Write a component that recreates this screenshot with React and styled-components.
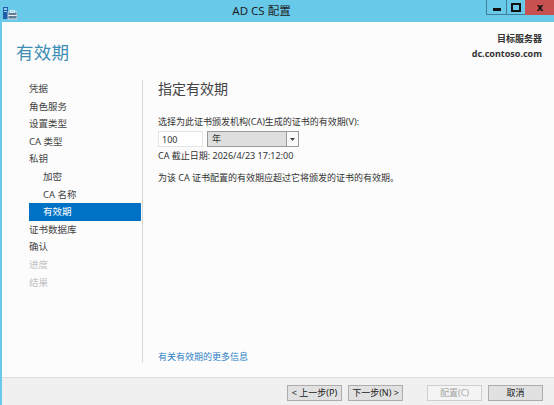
import styled, { createGlobalStyle } from "styled-components"

const Global = createGlobalStyle`
  html, body { margin: 0; padding: 0; }
  body {
    font-family: "Noto Sans", "Noto Sans CJK SC", sans-serif;
    background: #fcfcfc;
  }
`

//window frame
const Window = styled.div`
  width: 554px;
  height: 405px;
  display: flex;
  flex-direction: column;
  border-left: 2px solid #68c9e9;
  box-sizing: border-box;
  background: #fcfcfc;
  overflow: hidden;
`

const TitleBar = styled.div`
  height: 22px;
  flex: none;
  background: #68c9e9;
  display: flex;
  align-items: flex-start;
  position: relative;
  margin-left: -2px;
`

const AppIcon = styled.div`
  width: 14px;
  height: 14px;
  margin: 4px 0 0 3px;
`

const TitleText = styled.div`
  flex: 1;
  text-align: center;
  font-size: 11.5px;
  line-height: 22px;
  color: #1e1e1e;
  padding-left: 20px;
`

const Controls = styled.div`
  display: flex;
  height: 15px;
`

const Ctl = styled.div`
  width: ${p => p.w}px;
  height: 15px;
  box-sizing: border-box;
  background: ${p => p.close ? "#c75050" : "#68c9e9"};
  border: 1px solid ${p => p.close ? "#c75050" : "#3f7f99"};
  border-top: none;
  border-right: ${p => p.close ? "none" : "none"};
  display: flex;
  align-items: center;
  justify-content: center;
  font-family: "DejaVu Sans", sans-serif;
  font-weight: bold;
  font-size: 10px;
  color: #111;
`

const MinBar = styled.div`
  width: 8px;
  height: 3px;
  background: #111;
  margin-top: 5px;
`

const MaxBox = styled.div`
  width: 6px;
  height: 5px;
  border: 2px solid #111;
  border-top-width: 2px;
`

//header
const Header = styled.div`
  height: 58px;
  flex: none;
  display: flex;
  justify-content: space-between;
  padding: 0 12px 0 14px;
`

const PageTitle = styled.div`
  font-size: 17.5px;
  color: #3c8eb5;
  margin-top: 17px;
  letter-spacing: 0.2px;
`

const Server = styled.div`
  text-align: right;
  font-size: 9px;
  font-weight: bold;
  color: #333;
  margin-top: 9px;
  line-height: 15px;
`

//body
const Body = styled.div`
  flex: 1;
  display: flex;
  min-height: 0;
`

const Nav = styled.div`
  width: 112px;
  margin-left: 27px;
  display: flex;
  flex-direction: column;
`

const NavItem = styled.div`
  height: 17.6px;
  line-height: 17.6px;
  font-size: 9.5px;
  padding-left: ${p => p.sub ? 14 : 0}px;
  color: ${p => p.active ? "#fff" : p.off ? "#c2c2c2" : "#444"};
  background: ${p => p.active ? "#0072c6" : "transparent"};
  white-space: nowrap;
`

const Divider = styled.div`
  width: 1px;
  background: #d6d6d6;
  margin: 0 0 15px 1px;
`

const Content = styled.div`
  flex: 1;
  padding: 0 0 13px 15px;
  display: flex;
  flex-direction: column;
  color: #333;
  font-size: 9px;
`

const Heading = styled.div`
  font-size: 14px;
  color: #444;
  line-height: 18px;
  margin-top: 0;
`

const Label = styled.div`
  margin-top: 17px;
  line-height: 13px;
`

const Row = styled.div`
  display: flex;
  gap: 4px;
  margin-top: 3px;
`

const Input = styled.div`
  width: 45px;
  height: 16px;
  box-sizing: border-box;
  background: #fff;
  border: 1px solid #e4e4e4;
  padding-left: 3px;
  line-height: 15px;
  font-size: 9px;
`

const Select = styled.div`
  width: 92px;
  height: 16px;
  box-sizing: border-box;
  background: #dedede;
  border: 1px solid #9a9a9a;
  display: flex;
  font-size: 9px;
  line-height: 14px;
`

const SelectText = styled.div`
  flex: 1;
  padding-left: 4px;
`

const SelectArrow = styled.div`
  width: 11px;
  border-left: 1px solid #9a9a9a;
  background: #fafafa;
  display: flex;
  align-items: center;
  justify-content: center;
`

const Line = styled.div`
  margin-top: ${p => p.mt || 0}px;
  line-height: 14px;
`

const Spacer = styled.div`
  flex: 1;
`

const Link = styled.div`
  color: #2f82c6;
  font-size: 9px;
  line-height: 14px;
`

//footer
const Footer = styled.div`
  height: 28px;
  flex: none;
  background: #f0f0f0;
  border-top: 1px solid #dedede;
  box-sizing: border-box;
  margin-left: -2px;
  padding-left: 2px;
  display: flex;
  justify-content: flex-end;
  align-items: flex-start;
  padding-top: 7px;
  padding-right: 11px;
`

const Button = styled.div`
  width: 55px;
  height: 16px;
  box-sizing: border-box;
  border: 1px solid ${p => p.disabled ? "#cfcfcf" : "#adadad"};
  background: ${p => p.disabled ? "#f4f4f4" : "#e1e1e1"};
  color: ${p => p.disabled ? "#a6a6a6" : "#222"};
  font-size: 9px;
  line-height: 14px;
  text-align: center;
  margin-left: ${p => p.gap || 6}px;
  white-space: nowrap;
`

const navItems = [
  { t: "凭据" },
  { t: "角色服务" },
  { t: "设置类型" },
  { t: "CA 类型" },
  { t: "私钥" },
  { t: "加密", sub: true },
  { t: "CA 名称", sub: true },
  { t: "有效期", sub: true, active: true },
  { t: "证书数据库" },
  { t: "确认" },
  { t: "进度", off: true },
  { t: "结果", off: true },
]

export default function App() {
  return (
    <>
      <Global />
      <Window>
        <TitleBar>
          <AppIcon>
            <svg width="14" height="14" viewBox="0 0 14 14">
              <rect x="0" y="0" width="5" height="12" fill="#1f5fa8" />
              <rect x="1" y="1" width="3" height="2" fill="#8ec9f0" />
              <rect x="1" y="4" width="3" height="1" fill="#8ec9f0" />
              <rect x="5" y="5" width="9" height="7" fill="#5f7f96" stroke="#e8eef2" strokeWidth="0.8" />
              <rect x="7.5" y="3.5" width="4" height="2" fill="none" stroke="#e8eef2" strokeWidth="0.8" />
              <rect x="5" y="8" width="9" height="1" fill="#e8eef2" />
            </svg>
          </AppIcon>
          <TitleText>AD CS 配置</TitleText>
          <Controls>
            <Ctl w={20}><MinBar /></Ctl>
            <Ctl w={19}><MaxBox /></Ctl>
            <Ctl w={29} close>x</Ctl>
          </Controls>
        </TitleBar>

        <Header>
          <PageTitle>有效期</PageTitle>
          <Server>
            <div>目标服务器</div>
            <div>dc.contoso.com</div>
          </Server>
        </Header>

        <Body>
          <Nav>
            {navItems.map(n => (
              <NavItem key={n.t} sub={n.sub} active={n.active} off={n.off}>{n.t}</NavItem>
            ))}
          </Nav>
          <Divider />
          <Content>
            <Heading>指定有效期</Heading>
            <Label>选择为此证书颁发机构(CA)生成的证书的有效期(V):</Label>
            <Row>
              <Input>100</Input>
              <Select>
                <SelectText>年</SelectText>
                <SelectArrow>
                  <svg width="5" height="3" viewBox="0 0 5 3"><path d="M0 0h5L2.5 3z" fill="#444" /></svg>
                </SelectArrow>
              </Select>
            </Row>
            <Line mt={2}>CA 截止日期: 2026/4/23 17:12:00</Line>
            <Line mt={8}>为该 CA 证书配置的有效期应超过它将颁发的证书的有效期。</Line>
            <Spacer />
            <Link>有关有效期的更多信息</Link>
          </Content>
        </Body>

        <Footer>
          <Button>&lt; 上一步(P)</Button>
          <Button>下一步(N) &gt;</Button>
          <Button disabled gap={24}>配置(C)</Button>
          <Button>取消</Button>
        </Footer>
      </Window>
    </>
  )
}
